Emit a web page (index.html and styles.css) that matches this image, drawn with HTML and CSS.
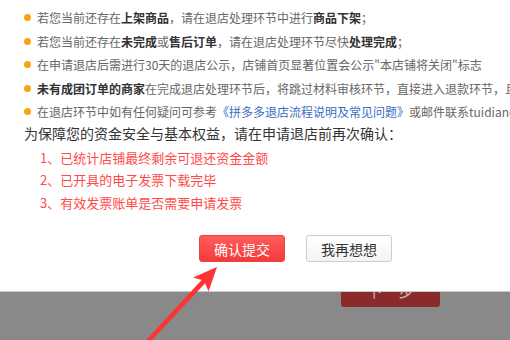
FILE: index.html
```html
<!DOCTYPE html>
<html lang="zh-CN">
<head>
  <meta charset="UTF-8" />
  <title>退店确认</title>
  <link rel="stylesheet" href="styles.css">
</head>
<body>

  <div class="modal">
    <ul class="tips">
      <li><span>若您当前还存在<b>上架商品</b>，请在退店处理环节中进行<b>商品下架</b>；</span></li>
      <li><span>若您当前还存在<b>未完成</b>或<b>售后订单</b>，请在退店处理环节尽快<b>处理完成</b>；</span></li>
      <li><span>在申请退店后需进行30天的退店公示，店铺首页显著位置会公示"本店铺将关闭"标志</span></li>
      <li><span><b>未有成团订单的商家</b>在完成退店处理环节后，将跳过材料审核环节，直接进入退款环节，且退店申请提交后不可撤回</span></li>
      <li><span>在退店环节中如有任何疑问可参考<a href="#">《拼多多退店流程说明及常见问题》</a>或邮件联系tuidian@pinduoduo.com</span></li>
    </ul>

    <p class="confirm-title">为保障您的资金安全与基本权益，请在申请退店前再次确认：</p>

    <ol class="checks">
      <li>1、已统计店铺最终剩余可退还资金金额</li>
      <li>2、已开具的电子发票下载完毕</li>
      <li>3、有效发票账单是否需要申请发票</li>
    </ol>

    <div class="actions">
      <button class="btn btn-primary">确认提交</button>
      <button class="btn">我再想想</button>
    </div>
  </div>

  <div class="mask">
    <button class="next">下一步</button>
  </div>

  <!-- annotation arrow -->
  <svg class="arrow" width="510" height="340" viewBox="0 0 510 340">
    <polygon points="217,267 193,277.5 201.6,280 145.3,340.8 148.7,343.6 205.2,283.3 208.5,291.5" fill="#fc3434" />
  </svg>

</body>
</html>
```

FILE: styles.css
```css
body {
  font-family: 'Noto Sans CJK SC', 'Liberation Sans', sans-serif;
  margin: 0;
  width: 510px;
  height: 340px;
  overflow: hidden;
  background: #fff;
  color: #333;
}

.modal {
  height: 291px;
  box-sizing: border-box;
  padding-top: 6px;
  overflow: hidden;
}

.tips {
  list-style: none;
  margin: 0;
  padding: 0 0 0 24px;
  font-size: 12px;
  line-height: 23.5px;
  color: #666;
  white-space: nowrap;
}

.tips li {
  display: flex;
  align-items: center;
  gap: 6px;
}

.tips li::before {
  content: "";
  flex: none;
  width: 7px;
  height: 7px;
  border-radius: 50%;
  background: #fca311;
}

.tips b {
  color: #333;
  font-weight: 700;
}

.tips a {
  color: #3a6cc0;
  text-decoration: none;
}

.confirm-title {
  margin: 0;
  padding-left: 24px;
  font-size: 14px;
  line-height: 18px;
  color: #333;
  white-space: nowrap;
}

.checks {
  list-style: none;
  margin: 5px 0 0 0;
  padding: 0 0 0 40px;
  font-size: 13px;
  line-height: 22.5px;
  color: #ff4a4a;
}

.actions {
  display: flex;
  gap: 21px;
  margin-top: 21px;
  padding-left: 199px;
}

.btn {
  width: 86px;
  height: 27px;
  padding: 0;
  border: 1px solid #cdcdcd;
  border-radius: 3px;
  background: linear-gradient(#fff, #f4f4f4);
  font-family: inherit;
  font-size: 14px;
  color: #333;
}

.btn-primary {
  border-color: #f04040;
  background: linear-gradient(#ff5c5c, #f53a3a);
  color: #fff;
}

.mask {
  height: 48px;
  border-top: 1px solid #c9c9c9;
  background: #898989;
  overflow: hidden;
  padding-left: 341px;
}

.next {
  display: block;
  width: 99px;
  height: 34px;
  margin-top: -19px;
  padding: 0;
  border: none;
  border-radius: 3px;
  background: #8a2a2a;
  font-family: inherit;
  font-size: 16px;
  color: #c9b2b2;
}

.arrow {
  position: fixed;
  left: 0;
  top: 0;
  pointer-events: none;
}
```
